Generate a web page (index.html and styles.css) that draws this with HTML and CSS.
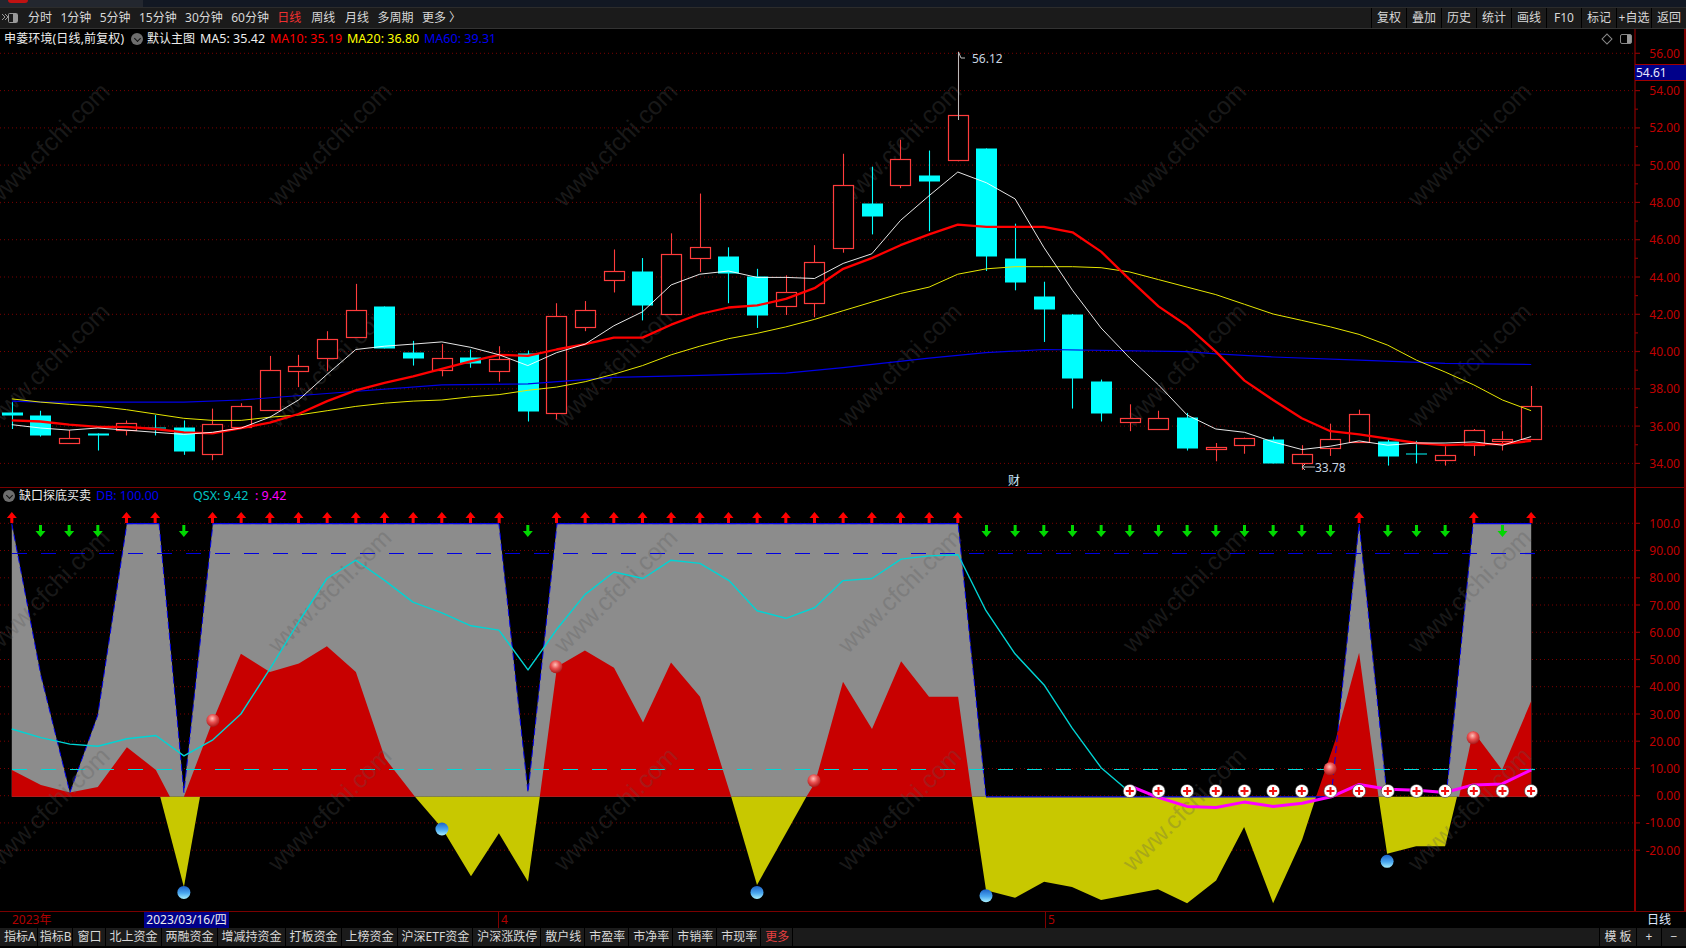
FILE: index.html
```html
<!DOCTYPE html>
<html lang="zh-CN">
<head>
<meta charset="utf-8">
<title>申菱环境 日线</title>
<link rel="stylesheet" href="styles.css">
</head>
<body>
<div class="app">
  <header class="titlebar"><span class="logo"></span></header>
  <nav class="toolbar">
    <div class="periods">
      <svg class="collapse" viewBox="0 0 18 14" aria-hidden="true"><path d="M1 3l3 3-3 3M4 3l3 3-3 3" fill="none" stroke="#999" stroke-width="1"/><rect x="7.5" y="2.5" width="9" height="9" rx="1" fill="none" stroke="#999"/><rect x="12" y="3" width="4" height="8" fill="#999"/></svg>
      <span>分时</span><span>1分钟</span><span>5分钟</span><span>15分钟</span><span>30分钟</span><span>60分钟</span><span class="on">日线</span><span class="wide">周线</span><span class="wide">月线</span><span>多周期</span><span>更多 〉</span>
    </div>
    <div class="actions">
      <span>复权</span><span>叠加</span><span>历史</span><span>统计</span><span>画线</span><span>F10</span><span>标记</span><span>+自选</span><span>返回</span>
    </div>
  </nav>
  <section class="panel upper">
    <svg id="priceChart" class="chart"></svg>
    <svg id="priceAxis" class="axis"></svg>
    <div class="legend legend-top">
      <span class="white name">申菱环境(日线,前复权)</span>
      <span class="chev"></span>
      <span class="white main-name">默认主图</span>
      <span class="white ma5">MA5: 35.42</span>
      <span class="red ma10">MA10: 35.19</span>
      <span class="yellow ma20">MA20: 36.80</span>
      <span class="blue ma60">MA60: 39.31</span>
    </div>
    <div class="chart-tools">
      <span class="diamond"></span>
      <span class="split"></span>
    </div>
    <div class="price-tag">54.61</div>
  </section>
  <section class="panel lower">
    <svg id="signalChart" class="chart"></svg>
    <svg id="signalAxis" class="axis"></svg>
    <div class="legend legend-low">
      <span class="chev"></span>
      <span class="white ind-name">缺口探底买卖</span>
      <span class="blue db">DB: 100.00</span>
      <span class="teal qsx">QSX: 9.42</span>
      <span class="magenta qsv">: 9.42</span>
    </div>
  </section>
  <div class="timebar">
    <span class="t-year">2023年</span>
    <span class="t-date">2023/03/16/四</span>
    <span class="t-m4">4</span>
    <span class="t-m5">5</span>
    <span class="t-kind">日线</span>
  </div>
  <footer class="tabs">
    <div class="tablist">
      <span class="tight">指标A</span><span class="tight">指标B</span><span>窗口</span><span>北上资金</span><span>两融资金</span><span>增减持资金</span><span>打板资金</span><span>上榜资金</span><span>沪深ETF资金</span><span>沪深涨跌停</span><span>散户线</span><span>市盈率</span><span>市净率</span><span>市销率</span><span>市现率</span><span class="on">更多</span>
    </div>
    <div class="tabtools">
      <span class="tpl">模 板</span><span class="pm">+</span><span class="pm">−</span>
    </div>
  </footer>
</div>
<script src="chart.js"></script>
</body>
</html>
```
FILE: styles.css
```css
* { box-sizing: border-box; }
html, body { margin: 0; padding: 0; background: #000; }
body { width: 1686px; height: 948px; overflow: hidden; font-family: "Noto Sans", "Noto Sans CJK SC", sans-serif; font-size: 12px; color: #ddd; }
.app { display: flex; flex-direction: column; width: 1686px; height: 948px; }

.titlebar { height: 8px; flex: none; background: linear-gradient(90deg, #23272f 0, #23272f 143px, #121823 143px); border-bottom: 1px solid #2c2c2c; padding-left: 8px; }
.logo { display: block; width: 20px; height: 3px; background: #c01212; border-radius: 0 0 3px 3px; }

.toolbar { height: 21px; flex: none; display: flex; justify-content: space-between; background: #1b1b1b; border-bottom: 1px solid #333; line-height: 20px; }
.periods { display: flex; gap: 8.4px; padding-left: 1px; color: #d8d8d8; }
.collapse { width: 18px; height: 14px; margin: 3px 0.6px 0 0; }
.periods .on { color: #f03030; }
.periods .wide { margin-left: 1.5px; }
.actions { display: flex; color: #d8d8d8; }
.actions span { width: 35px; text-align: center; border-left: 1px solid #000; white-space: nowrap; }

.panel { position: relative; display: flex; flex: none; border-bottom: 1px solid #7a0000; }
.upper { height: 459px; }
.lower { height: 424px; }
.chart { display: block; width: 1634px; height: 100%; flex: none; background: #000; }
.axis { display: block; width: 52px; height: 100%; flex: none; background: #000; }

.legend { position: absolute; left: 0; top: 0; height: 18px; width: 600px; line-height: 18px; white-space: nowrap; }
.legend span { position: absolute; top: 0; }
.legend-top { top: 1px; font-size: 12px; }
.legend-low { top: -1px; }
.white { color: #eee; }
.red { color: #f00; }
.yellow { color: #ff0; }
.blue { color: #0000f0; }
.teal { color: #00c4c4; }
.magenta { color: #f0f; }
.name { left: 4px; letter-spacing: .15px; }
.legend-top .chev { left: 131px; }
.main-name { left: 147px; }
.ma5 { left: 200px; font-size: 12.5px; }
.ma10 { left: 270px; font-size: 12.5px; }
.ma20 { left: 347px; font-size: 12.5px; }
.ma60 { left: 424px; font-size: 12.5px; }
.legend .chev { top: 3px; width: 12px; height: 12px; border-radius: 50%; background: #6e6e6e; }
.chev::after { content: ""; position: absolute; left: 4px; top: 2.5px; width: 4px; height: 4px; border-right: 1.2px solid #111; border-bottom: 1.2px solid #111; transform: rotate(45deg); }
.legend-low .chev { left: 3px; }
.ind-name { left: 19px; }
.db { left: 96px; font-size: 12.5px; }
.qsx { left: 193px; font-size: 12.5px; }
.qsv { left: 255px; font-size: 12.5px; }

.chart-tools { position: absolute; left: 1603px; top: 3px; display: flex; gap: 9px; align-items: center; height: 14px; }
.diamond { width: 8px; height: 8px; border: 1px solid #888; transform: rotate(45deg); }
.split { width: 12px; height: 10px; border: 1px solid #888; border-radius: 2px; background: linear-gradient(90deg, transparent 60%, #999 60%); }
.price-tag { position: absolute; left: 1635px; top: 35px; width: 51px; height: 17px; background: #00008a; border-top: 1px solid #a00000; border-bottom: 1px solid #a00000; color: #e8e8ff; font-size: 12px; line-height: 15px; padding-left: 1px; }

/* chart drawing */
.grid { stroke: #7a0000; stroke-width: 1; stroke-dasharray: 1 3; }
.wm { font-family: "Liberation Sans", sans-serif; font-size: 24.6px; fill: #585858; opacity: .28; text-anchor: middle; }
.up { fill: #000; stroke: #ff3c3c; stroke-width: 1.2; }
.down { fill: #00ffff; }
.wick-up { stroke: #ff3c3c; stroke-width: 1.1; }
.wick-down { stroke: #00ffff; stroke-width: 1.1; }
.leader { fill: none; stroke: #bbb; stroke-width: 1; }
.note { font-size: 12px; fill: #c8d4e0; }
.cai { font-size: 12px; fill: #cfe8ff; }
.ax { stroke: #8a0000; stroke-width: 1.2; }
.ax.thick { stroke-width: 2; }
.ax2 { stroke: #7a0000; stroke-width: 2; }
.tick { font-size: 12px; fill: #c00000; text-anchor: end; }
.dash-b { stroke: #0000e0; stroke-width: 1.2; stroke-dasharray: 15 14; }
.dash-c { stroke: #00d8d8; stroke-width: 1.2; stroke-dasharray: 15 14; }
.a-up { fill: #ff0000; }
.a-down { fill: #00d800; }
.plus { fill: #fff; stroke: #333; stroke-width: .6; }
.cross { fill: none; stroke: #f01010; stroke-width: 2; }

.timebar { position: relative; height: 16px; flex: none; background: #000; line-height: 16px; color: #b00000; }
.timebar span { position: absolute; top: 0; }
.t-year { left: 12px; }
.t-date { left: 144px; width: 85px; background: #00008a; color: #eee; text-align: center; }
.t-m4 { left: 498px; padding-left: 2px; border-left: 1px solid #800000; }
.t-m5 { left: 1045px; padding-left: 2px; border-left: 1px solid #800000; }
.t-kind { left: 1647px; color: #dfe8ff; }

.tabs { height: 18px; flex: none; display: flex; justify-content: space-between; background: #1b1b1b; line-height: 17px; }
.tablist { display: flex; padding-left: 2px; color: #d8d8d8; }
.tablist span { padding: 0 3px 0 4px; border-right: 1px solid #000; white-space: nowrap; }
.tablist .tight { padding: 0 1px 0 2px; }
.tablist .on { color: #e84040; }
.tabtools { display: flex; color: #d8d8d8; }
.tabtools span { border-left: 1px solid #000; text-align: center; }
.tpl { width: 37px; }
.pm { width: 25px; }
```
FILE: chart.js
```js
(function () {
  var k = 1686 / 1568;
  var xi = function (i) { return (11 + 26.66 * i) * k; };
  var pts = function (a) { return a.map(function (p) { return (p[0] * k).toFixed(1) + ',' + (p[1] * k).toFixed(1); }).join(' '); };
  var seq = function (a) { return a.map(function (v, i) { return [11 + 26.66 * i, v]; }); };
  function line(a, color, w, extra) { return '<polyline points="' + pts(a) + '" fill="none" stroke="' + color + '" stroke-width="' + w + '" stroke-linejoin="round" ' + (extra || '') + '/>'; }
  function poly(a, color) { return '<polygon points="' + pts(a) + '" fill="' + color + '"/>'; }

  var defs = '<defs>' +
    '<radialGradient id="ballR" cx="45%" cy="35%" r="70%"><stop offset="0" stop-color="#ffc0b8"/><stop offset=".45" stop-color="#e85050"/><stop offset="1" stop-color="#a01010"/></radialGradient>' +
    '<linearGradient id="ballB" x1="0" y1="0" x2="0" y2="1"><stop offset="0" stop-color="#1c62c8"/><stop offset=".55" stop-color="#4aa8f0"/><stop offset="1" stop-color="#a8f0ff"/></linearGradient>' +
    '</defs>';

  function watermark(rows) {
    var s = '', cols = [50, 312, 578, 842, 1107, 1372];
    rows.forEach(function (r) {
      cols.forEach(function (c) {
        var x = c * k, y = r * k;
        s += '<text class="wm" x="' + x.toFixed(1) + '" y="' + y.toFixed(1) + '" transform="rotate(-45 ' + x.toFixed(1) + ' ' + y.toFixed(1) + ')">www.cfchi.com</text>';
      });
    });
    return s;
  }

  /* ---------- price panel ---------- */
  var PY = function (p) { return 53.3 + (56 - p) * 18.64; };
  var c = [ // [up?, bodyTop, bodyBottom, wickHigh, wickLow] in 1568-wide picture coords
    [0,383,386,374,399],[0,386,405,382,406],[1,407,412,400,412],[0,403,405,403,419],[1,393,400,391,405],[0,397,398,386,405],[0,397,419,391,423],[1,394,422,380,428],[1,378,397,375,397],
    [1,344,381,331,381],[1,340,345,330,360],[1,315,333,308,345],[1,288,313,264,313],[0,285,324,285,324],[0,327,333,317,340],[1,333,344,320,350],[0,332,338,325,342],[1,334,345,322,355],
    [0,328,382,326,392],[1,294,384,282,390],[1,288,304,280,308],[1,252,260,232,272],[0,252,284,240,298],[1,236,292,217,293],[1,230,240,180,253],[0,238,254,230,282],[0,257,293,250,305],
    [1,272,285,256,293],[1,244,282,228,295],[1,172,231,143,235],[0,189,201,155,218],[1,148,172,130,175],[0,163,168,140,215],[1,107,149,48,150],[0,138,238,138,252],[0,240,262,208,270],
    [0,275,287,262,318],[0,292,352,292,380],[0,354,384,353,392],[1,389,392,376,401],[1,389,399,382,399],[0,388,417,384,419],[1,416,418,412,429],[1,407,414,407,422],[0,408,431,406,431],
    [1,422,431,414,437],[1,408,417,394,424],[1,385,411,381,411],[0,410,424,408,433],[0,421.6,421.6,410,431],[1,423,428,415,433],[1,400,414,399,424],[1,408,410,401,419],[1,378,408,359,408]
  ];
  var ma5 = seq([395,398,400,398,400,402,404,402,398,388,372,348,325,322,320,318,323,330,340,328,320,303,290,265,255,252,258,258,259,245,236,205,182,160,170,185,230,270,305,333,358,386,399,402,411,418,415,410,414,412,412,411,414,406]);
  var ma10 = seq([391,392,395,397,397,399,402,403,398,393,385,373,363,356,350,343,336,330,331,325,320,314,314,302,292,286,284,278,268,250,240,228,218,209,211,211,211,216,234,260,285,303,327,354,372,389,401,404,408,412,414,413,413,410]);
  var ma20 = seq([371,374,376,378,381,385,389,391,391,388,386,382,378,375,373,372,369,367,363,360,355,348,340,330,322,315,310,304,297,289,281,273,267,255,250,248,248,248,249,253,260,267,274,283,292,298,304,311,321,335,346,358,372,382]);
  var ma60 = [[11,373],[38,374],[118,374],[171,374],[224,372],[304,366],[411,358],[491,357],[571,351],[651,349],[731,347],[784,342],[864,333],[917,328],[971,325],[1104,327],[1131,329],[1184,332],[1264,335],[1344,338],[1424,339]];

  var s = defs;
  for (var p = 34; p <= 56; p += 2) s += '<line class="grid" x1="0" x2="1634" y1="' + PY(p).toFixed(1) + '" y2="' + PY(p).toFixed(1) + '"/>';
  s += watermark([140, 345]);
  c.forEach(function (d, i) {
    var x = Math.round(xi(i)) + 0.5, t = Math.round(d[1] * k) + 0.5, b = Math.round(d[2] * k) + 0.5, hi = d[3] * k, lo = d[4] * k;
    if (d[0]) {
      s += '<line class="wick-up" x1="' + x + '" x2="' + x + '" y1="' + hi + '" y2="' + t + '"/><line class="wick-up" x1="' + x + '" x2="' + x + '" y1="' + b + '" y2="' + lo + '"/>';
      s += '<rect class="up" x="' + (x - 10) + '" y="' + t + '" width="20" height="' + (b - t) + '"/>';
    } else {
      s += '<line class="wick-down" x1="' + x + '" x2="' + x + '" y1="' + hi + '" y2="' + lo + '"/>';
      s += '<rect class="down" x="' + (x - 10.5) + '" y="' + t + '" width="21" height="' + Math.max(b - t, 1) + '"/>';
    }
  });
  s += line(ma60, '#0000e6', 1.2) + line(ma20, '#e6e600', 1) + line(ma10, '#ff0000', 2.3) + line(ma5, '#ffffff', .9);
  s += '<path d="M965 58H961L958.5 52V120" class="leader"/>';
  s += '<text class="note" x="972" y="62.5">56.12</text>';
  s += '<path d="M1315 467H1302M1305 464L1302 467L1305 470" class="leader"/>';
  s += '<text class="note" x="1315" y="472">33.78</text>';
  s += '<text class="cai" x="1014" y="485" text-anchor="middle">财</text>';
  var pc = document.getElementById('priceChart');
  pc.setAttribute('viewBox', '0 29 1634 458');
  pc.innerHTML = s;

  var a = '<line class="ax" x1="1" x2="1" y1="29" y2="487"/><line class="ax2" x1="51" x2="51" y1="29" y2="487"/>';
  for (var q = 34; q <= 56; q += 1) {
    var yy = PY(q).toFixed(1);
    a += '<line class="ax" x1="1" x2="' + (q % 2 ? 4 : 6) + '" y1="' + yy + '" y2="' + yy + '"/>';
    if (q % 2 === 0) a += '<text class="tick" x="46" y="' + (PY(q) + 4.5).toFixed(1) + '">' + q + '.00</text>';
  }
  var pa = document.getElementById('priceAxis');
  pa.setAttribute('viewBox', '0 29 52 458');
  pa.innerHTML = a;

  /* ---------- signal panel ---------- */
  var VY = function (v) { return 795.7 - 2.724 * v; };
  var gray = [[11,741],[11,487],[38,628],[65,737],[91,665],[118,487],[148,487],[171,737],[198,487],[464,487],[491,737],[518,487],[891,487],[917,741]];
  var gray2 = [[1238,741],[1264,487],[1290,741]];
  var gray3 = [[1345,741],[1370,487],[1424,487],[1424,741]];
  var red = [
    [[11,741],[11,716],[38,730],[65,737],[91,732],[118,695],[145,716],[158,741]],
    [[171,741],[198,670],[224,608],[251,625],[278,617],[304,601],[331,625],[358,705],[386,741]],
    [[502,741],[518,620],[544,605],[571,621],[598,672],[624,616],[651,648],[680,741]],
    [[750,741],[758,728],[784,634],[811,678],[838,615],[864,648],[891,648],[904,741]],
    [[1224,741],[1242,688],[1264,607],[1282,741]],
    [[1357,741],[1370,680],[1397,716],[1424,652],[1424,741]]
  ];
  var yel = [
    [[149,741],[171,825],[186,741]],
    [[386,741],[411,770],[438,815],[464,775],[491,820],[502,741]],
    [[680,741],[704,823],[731,775],[750,741]],
    [[904,741],[917,828],[944,835],[971,820],[997,825],[1024,837],[1051,832],[1077,827],[1104,840],[1131,819],[1157,769],[1184,840],[1211,781],[1224,741]],
    [[1282,741],[1290,794],[1317,787],[1344,787],[1355,741]]
  ];
  var qsx = [[11,678],[38,686],[65,692],[91,694],[118,687],[145,684],[171,703],[198,688],[224,664],[251,622],[278,578],[304,538],[331,521],[358,540],[384,560],[411,570],[438,582],[464,586],[491,623],[518,585],[544,553],[571,532],[598,538],[624,521],[651,524],[678,540],[704,568],[731,575],[758,565],[784,540],[811,538],[838,520],[864,517],[891,516],[917,568],[944,608],[971,637],[997,677],[1024,714],[1051,737]];
  var mag = [[1051,731],[1077,741.5],[1104,750],[1131,751],[1157,746],[1184,750],[1211,747],[1238,741],[1264,729.5],[1291,734],[1318,735],[1344,737],[1370,730],[1397,729],[1424,716]];

  var t = defs;
  var slope = 'stroke-dasharray="7 4"';
  for (var v = -20; v <= 100; v += 10) t += '<line class="grid" x1="0" x2="1634" y1="' + VY(v).toFixed(1) + '" y2="' + VY(v).toFixed(1) + '"/>';
  t += poly(gray, '#8c8c8c') + poly(gray2, '#8c8c8c') + poly(gray3, '#8c8c8c');
  yel.forEach(function (g) { t += poly(g, '#c8c800'); });
  red.forEach(function (g) { t += poly(g, '#c80000'); });
  t += line(gray.slice(1), '#0000f0', 1, slope) + line(gray2, '#0000f0', 1, slope) + line(gray3.slice(0, 2), '#0000f0', 1, slope);
  [[[118,487],[148,487]],[[198,487],[464,487]],[[518,487],[891,487]],[[917,741],[1238,741]],[[1370,487],[1424,487]]].forEach(function (e) { t += line(e, '#0000f0', 1.3); });
  t += '<line class="dash-b" x1="12" x2="1538" y1="553.5" y2="553.5"/>';
  t += '<line class="dash-c" x1="12" x2="1538" y1="769.5" y2="769.5"/>';
  t += watermark([555, 758]);
  t += line(qsx, '#00d4d4', 1.4) + line(mag, '#ff00ff', 3);

  var ups = [0,4,5,7,8,9,10,11,12,13,14,15,16,17,19,20,21,22,23,24,25,26,27,28,29,30,31,32,33,47,51,53];
  var downs = [1,2,3,6,18,34,35,36,37,38,39,40,41,42,43,44,45,46,48,49,50,52];
  ups.forEach(function (i) { var x = xi(i); t += '<path class="a-up" d="M' + x + ' 512l5 6h-3.5v5h-3v-5h-3.5z"/>'; });
  downs.forEach(function (i) { var x = xi(i); t += '<path class="a-down" d="M' + x + ' 537l-5 -6h3.5v-6h3v6h3.5z"/>'; });
  for (var j = 39; j <= 53; j++) {
    var px = xi(j).toFixed(1), py = 791;
    t += '<circle class="plus" cx="' + px + '" cy="' + py + '" r="6.6"/><path class="cross" d="M' + (px - 4) + ' ' + py + 'h8M' + px + ' ' + (py - 4) + 'v8"/>';
  }
  [[198,670],[517,620],[757,726],[1237,715],[1370,686]].forEach(function (b) { t += '<circle cx="' + b[0] * k + '" cy="' + b[1] * k + '" r="6.5" fill="url(#ballR)"/>'; });
  [[171,830],[411,771],[704,830],[917,833],[1290,801]].forEach(function (b) { t += '<circle cx="' + b[0] * k + '" cy="' + b[1] * k + '" r="6.5" fill="url(#ballB)"/>'; });
  var sc = document.getElementById('signalChart');
  sc.setAttribute('viewBox', '0 488 1634 423');
  sc.innerHTML = t;

  var b = '<line class="ax thick" x1="1" x2="1" y1="488" y2="911"/><line class="ax2" x1="51" x2="51" y1="488" y2="911"/>';
  for (var w = -20; w <= 100; w += 10) {
    var y2 = VY(w).toFixed(1);
    b += '<line class="ax" x1="1" x2="6" y1="' + y2 + '" y2="' + y2 + '"/>';
    b += '<text class="tick" x="46" y="' + (VY(w) + 4.5).toFixed(1) + '">' + (w === 100 ? '100.0' : w.toFixed(2)) + '</text>';
  }
  var sa = document.getElementById('signalAxis');
  sa.setAttribute('viewBox', '0 488 52 423');
  sa.innerHTML = b;
})();
```
